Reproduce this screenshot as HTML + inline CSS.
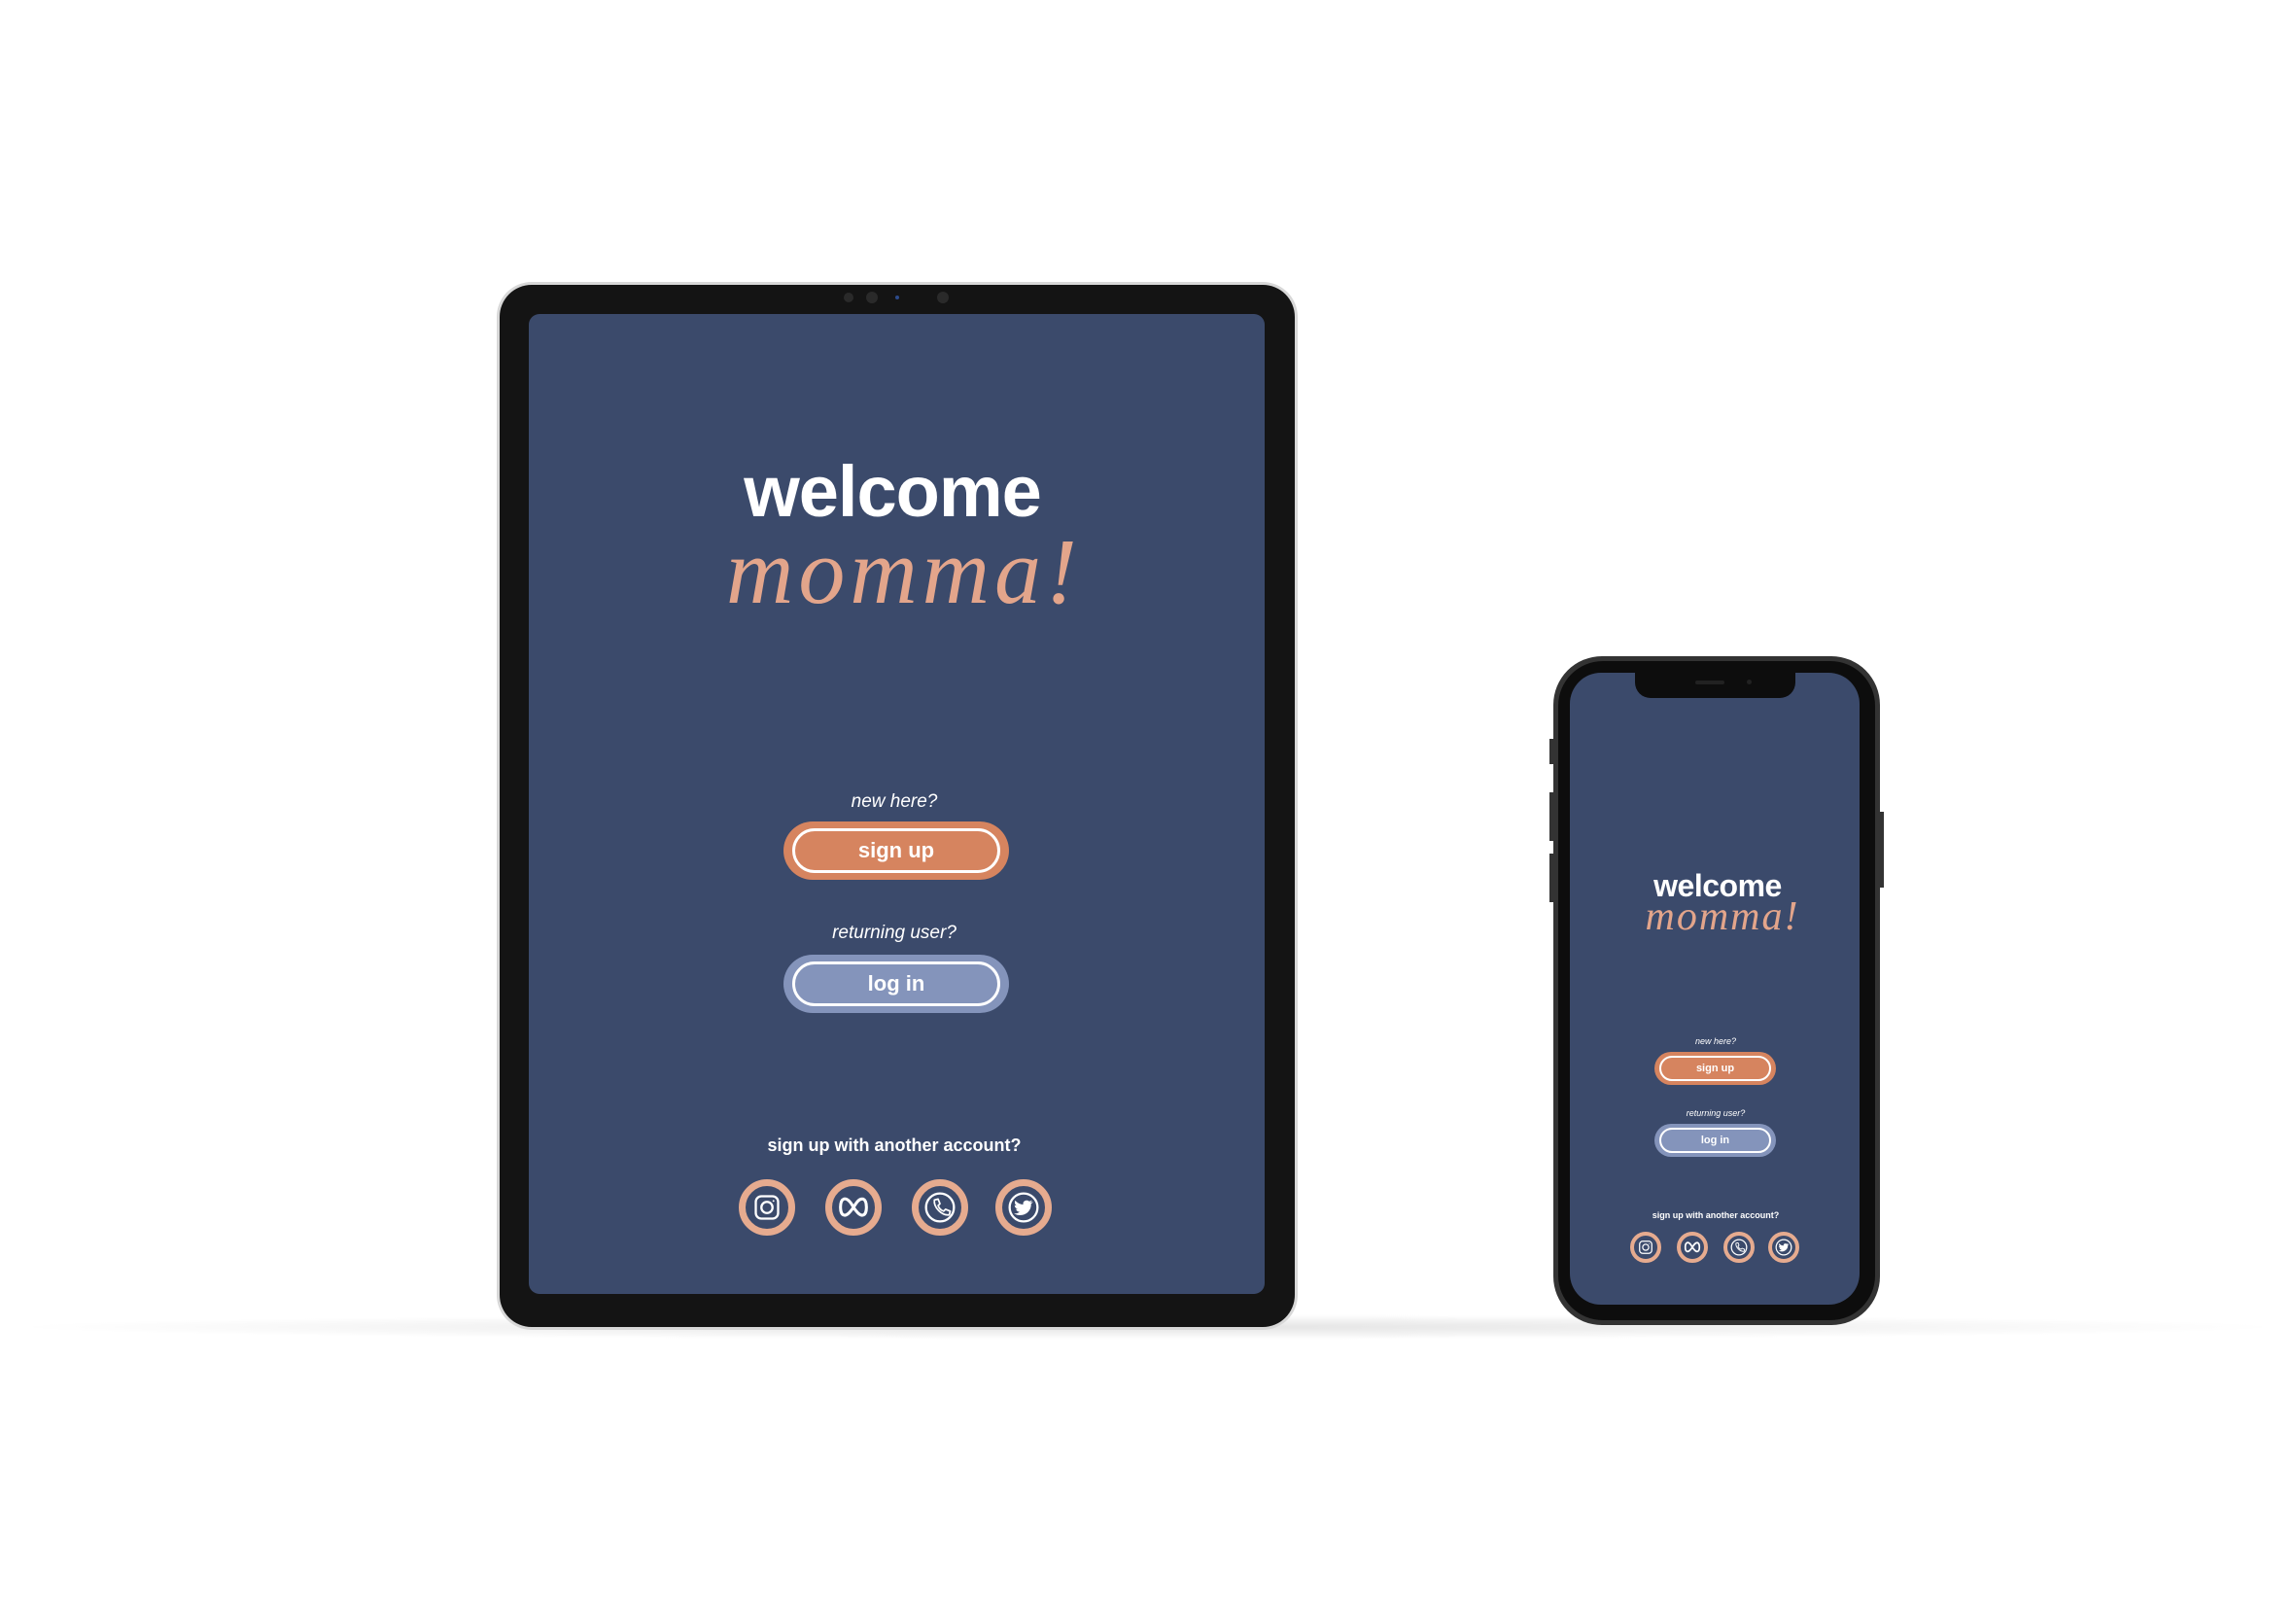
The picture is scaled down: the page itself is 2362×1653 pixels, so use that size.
<!DOCTYPE html>
<html><head><meta charset="utf-8"><style>
html,body{margin:0;padding:0;background:#fff;}
body{width:2362px;height:1653px;position:relative;overflow:hidden;font-family:"Liberation Sans",sans-serif;}
.abs{position:absolute;}
.c{text-align:center;white-space:nowrap;}
.w{color:#fff;font-weight:bold;}
.m{color:#e3a58b;font-family:"Liberation Serif",serif;font-style:italic;}
.pill{position:absolute;border-radius:999px;box-sizing:border-box;}
.pill .in{position:absolute;border:3px solid #fff;border-radius:999px;color:#fff;font-weight:bold;display:flex;align-items:center;justify-content:center;}
.ic{position:absolute;border-radius:50%;box-sizing:border-box;border:solid #e6ab8f;background:#3b4a6b;}
.ic svg{position:absolute;left:0;top:0;width:100%;height:100%;}
</style></head><body>
<div class="abs" style="left:0;top:1352px;width:2362px;height:26px;background:radial-gradient(ellipse at 50% 50%,rgba(0,0,0,0.11),rgba(0,0,0,0) 70%);"></div>

<div class="abs" style="left:511px;top:290px;width:824px;height:1078px;border-radius:36px;background:#d8d8d8;"></div>
<div class="abs" style="left:514px;top:293px;width:818px;height:1072px;border-radius:33px;background:#141414;"></div>
<div class="abs" style="left:544px;top:323px;width:757px;height:1008px;border-radius:11px;background:#3b4a6b;"></div>
<div class="abs" style="left:868px;top:301px;width:10px;height:10px;border-radius:50%;background:#2a2a2a;"></div>
<div class="abs" style="left:891px;top:300px;width:12px;height:12px;border-radius:50%;background:#2a2a2a;"></div>
<div class="abs" style="left:921px;top:304px;width:4px;height:4px;border-radius:50%;background:#2c4a8a;"></div>
<div class="abs" style="left:964px;top:300px;width:12px;height:12px;border-radius:50%;background:#2a2a2a;"></div>

<div class="abs c w" style="left:618px;top:466px;width:600px;font-size:74px;line-height:80px;letter-spacing:-1px;">welcome</div>
<div class="abs c m" style="left:620px;top:538px;width:620px;font-size:96px;line-height:100px;letter-spacing:5px;">momma!</div>

<div class="abs c" style="left:720px;top:814px;width:400px;color:#fff;font-style:italic;font-size:19px;">new here?</div>
<div class="pill" style="left:806px;top:845px;width:232px;height:60px;background:#d6845f;">
 <div class="in" style="left:9px;top:7px;right:9px;bottom:7px;font-size:22px;">sign up</div></div>
<div class="abs c" style="left:720px;top:949px;width:400px;color:#fff;font-style:italic;font-size:19px;">returning user?</div>
<div class="pill" style="left:806px;top:982px;width:232px;height:60px;background:#8494bb;">
 <div class="in" style="left:9px;top:7px;right:9px;bottom:7px;font-size:22px;">log in</div></div>
<div class="abs c w" style="left:670px;top:1168px;width:500px;font-size:18px;">sign up with another account?</div>

<div class="abs" style="left:1598px;top:675px;width:336px;height:688px;border-radius:50px;background:#333;"></div>
<div class="abs" style="left:1603px;top:680px;width:326px;height:678px;border-radius:46px;background:#0d0d0d;"></div>
<div class="abs" style="left:1594px;top:760px;width:4px;height:26px;background:#333;"></div>
<div class="abs" style="left:1594px;top:815px;width:4px;height:50px;background:#333;"></div>
<div class="abs" style="left:1594px;top:878px;width:4px;height:50px;background:#333;"></div>
<div class="abs" style="left:1934px;top:835px;width:4px;height:78px;background:#333;"></div>
<div class="abs" style="left:1615px;top:692px;width:298px;height:650px;border-radius:32px;background:#3b4a6b;"></div>
<div class="abs" style="left:1682px;top:690px;width:165px;height:28px;border-radius:0 0 16px 16px;background:#0d0d0d;"></div>
<div class="abs" style="left:1744px;top:700px;width:30px;height:4px;border-radius:2px;background:#222;"></div>
<div class="abs" style="left:1797px;top:699px;width:5px;height:5px;border-radius:50%;background:#222;"></div>

<div class="abs c w" style="left:1667px;top:893px;width:200px;font-size:32px;line-height:36px;letter-spacing:-0.5px;">welcome</div>
<div class="abs c m" style="left:1667px;top:920px;width:210px;font-size:42px;line-height:46px;letter-spacing:2px;">momma!</div>
<div class="abs c" style="left:1665px;top:1066px;width:200px;color:#fff;font-style:italic;font-size:9px;">new here?</div>
<div class="pill" style="left:1702px;top:1082px;width:125px;height:34px;background:#d6845f;">
 <div class="in" style="left:5px;top:4px;right:5px;bottom:4px;border-width:2px;font-size:11px;">sign up</div></div>
<div class="abs c" style="left:1665px;top:1140px;width:200px;color:#fff;font-style:italic;font-size:9px;">returning user?</div>
<div class="pill" style="left:1702px;top:1156px;width:125px;height:34px;background:#8494bb;">
 <div class="in" style="left:5px;top:4px;right:5px;bottom:4px;border-width:2px;font-size:11px;">log in</div></div>
<div class="abs c w" style="left:1640px;top:1245px;width:250px;font-size:9px;">sign up with another account?</div>

<svg width="0" height="0" style="position:absolute">
<defs>
<g id="insta" fill="none" stroke="#fff" stroke-width="2.4"><rect x="18" y="18" width="24" height="24" rx="6"/><circle cx="30" cy="30" r="6"/><circle cx="37" cy="23" r="1" fill="#fff" stroke="none"/></g>
<g id="meta" fill="none" stroke="#fff" stroke-width="3.2" stroke-linecap="round"><path d="M30 30 C26 22 22 20 19.5 21 C15 23 15 36 19 38 C23 40 27 34 30 30 C33 25 36 20 40.5 21 C45 23 45 36 41 38 C37 40 33 34 30 30Z"/></g>
<g id="phone" fill="none" stroke="#fff" stroke-width="2.4"><circle cx="30" cy="30" r="15"/><path d="M24 22 l4 -1 l2 5 l-2 2 c1 3 3 5 6 6 l2 -2 l5 2 l-1 4 c-8 1 -17 -8 -16 -16z" stroke-width="1.8" stroke-linejoin="round"/></g>
<g id="bird" fill="none" stroke="#fff" stroke-width="2.4"><circle cx="30" cy="30" r="15"/><path d="M40 24 c-1 .5 -2 .7 -3 .8 c1 -.6 1.8 -1.5 2 -2.5 c-1 .6 -2 1 -3 1.2 c-2 -2 -6 -1 -6.5 2 c0 .5 0 1 .1 1.4 c-3.5 -.2 -6.5 -1.8 -8.5 -4.3 c-1.2 2 -.4 4.2 1.3 5.4 c-.7 0 -1.4 -.2 -2 -.5 c0 2.2 1.5 3.8 3.4 4.2 c-.6 .2 -1.300 .2 -2 .1 c.5 1.7 2.2 2.9 4 3 c-1.8 1.3 -4 2 -6.2 1.7 c8.5 5 19 -.5 18.5 -10.5 c1 -.6 1.6 -1.3 2.1 -2z" fill="#fff" stroke="none"/></g>
</defs></svg>

<div class="ic" style="left:760px;top:1213px;width:58px;height:58px;border-width:7px;"><svg viewBox="7 7 46 46"><use href="#insta"/></svg></div>
<div class="ic" style="left:849px;top:1213px;width:58px;height:58px;border-width:7px;"><svg viewBox="7 7 46 46"><use href="#meta"/></svg></div>
<div class="ic" style="left:938px;top:1213px;width:58px;height:58px;border-width:7px;"><svg viewBox="7 7 46 46"><use href="#phone"/></svg></div>
<div class="ic" style="left:1024px;top:1213px;width:58px;height:58px;border-width:7px;"><svg viewBox="7 7 46 46"><use href="#bird"/></svg></div>

<div class="ic" style="left:1677px;top:1267px;width:32px;height:32px;border-width:4px;"><svg viewBox="7 7 46 46"><use href="#insta"/></svg></div>
<div class="ic" style="left:1725px;top:1267px;width:32px;height:32px;border-width:4px;"><svg viewBox="7 7 46 46"><use href="#meta"/></svg></div>
<div class="ic" style="left:1773px;top:1267px;width:32px;height:32px;border-width:4px;"><svg viewBox="7 7 46 46"><use href="#phone"/></svg></div>
<div class="ic" style="left:1819px;top:1267px;width:32px;height:32px;border-width:4px;"><svg viewBox="7 7 46 46"><use href="#bird"/></svg></div>
</body></html>
